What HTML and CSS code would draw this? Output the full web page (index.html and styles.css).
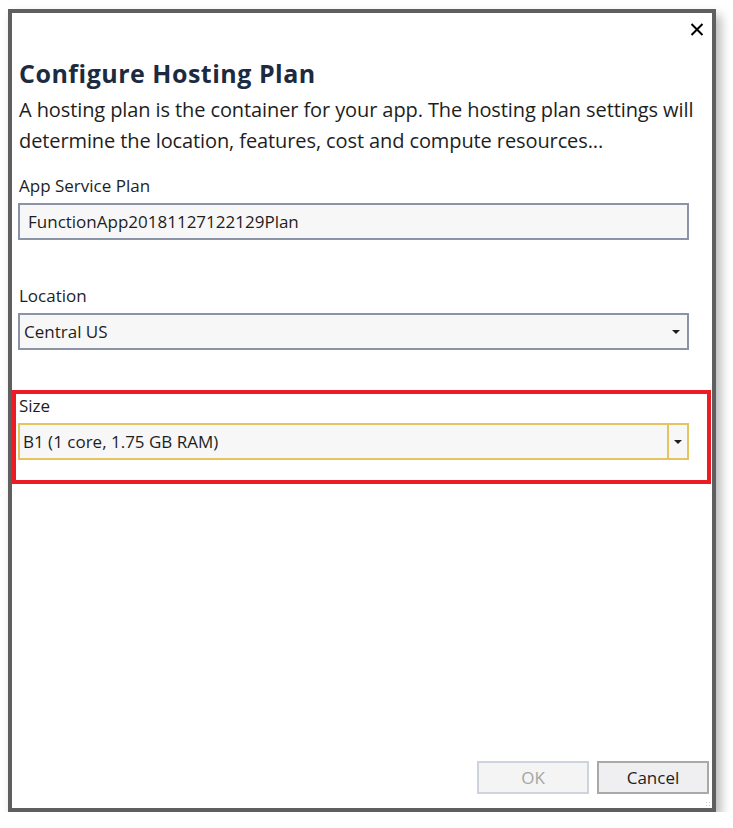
FILE: index.html
```html
<!DOCTYPE html>
<html lang="en">
<head>
<meta charset="utf-8">
<title>Configure Hosting Plan</title>
<link rel="stylesheet" href="styles.css">
</head>
<body>
<div class="window">
  <div class="titlebar">
    <button class="close" aria-label="Close">
      <svg width="14" height="13" viewBox="0 0 14 13"><path d="M1.5 1 L12.5 12 M12.5 1 L1.5 12" stroke="#000" stroke-width="2" fill="none"/></svg>
    </button>
  </div>
  <div class="content">
    <h1 class="title">Configure Hosting Plan</h1>
    <p class="desc">A hosting plan is the container for your app. The hosting plan settings will determine the location, features, cost and compute resources...</p>

    <div class="field first">
      <label class="label">App Service Plan</label>
      <div class="input">FunctionApp20181127122129Plan</div>
    </div>

    <div class="field loc">
      <label class="label">Location</label>
      <div class="select">
        <span class="value">Central US</span>
        <span class="arrow"></span>
      </div>
    </div>

    <div class="highlight">
      <label class="label">Size</label>
      <div class="select focused">
        <span class="value">B1 (1 core, 1.75 GB RAM)</span>
        <span class="arrow-btn"><span class="arrow"></span></span>
      </div>
    </div>
  </div>
  <div class="footer">
    <button class="btn disabled">OK</button>
    <button class="btn">Cancel</button>
  </div>
  <div class="grip"></div>
</div>
</body>
</html>
```
FILE: styles.css
```css
* { box-sizing: border-box; }
html, body { margin: 0; padding: 0; background: #fff; }
body {
  font-family: "Open Sans", "Noto Sans", sans-serif;
  color: #1e1e1e;
}
.window {
  position: relative;
  margin: 9px 0 0 8px;
  width: 708px;
  height: 803px;
  border: 4px solid #5f5f5f;
  background: #fff;
  box-shadow: 5px 6px 10px rgba(0,0,0,0.28);
  display: flex;
  flex-direction: column;
}
.titlebar {
  display: flex;
  justify-content: flex-end;
  height: 44px;
  padding: 10px 8px 0 0;
}
.close {
  border: 0;
  background: transparent;
  padding: 0;
  width: 14px;
  height: 13px;
  display: block;
}
.close svg { display: block; }
.content {
  padding: 0 23px 0 6px;
}
.title {
  margin: 0;
  padding-left: 1px;
  font-size: 25px;
  line-height: 32px;
  font-weight: 700;
  color: #1c2b3f;
  letter-spacing: 0.5px;
}
.desc {
  margin: 5px -21px 0 0;
  padding-left: 1px;
  font-size: 20px;
  line-height: 31px;
  letter-spacing: -0.1px;
  color: #1e1e1e;
}
.label {
  display: block;
  padding-left: 1px;
  font-size: 17px;
  line-height: 22px;
  margin-bottom: 6px;
}
.field.first { margin-top: 19px; }
.field.loc { margin-top: 45px; }
.input, .select {
  height: 37px;
  border: 2px solid #8a94a6;
  background: #f7f7f7;
  display: flex;
  align-items: center;
  font-size: 17px;
}
.input { padding-left: 8px; }
.select { padding-left: 4px; position: relative; }
.select .value { flex: 1; }
.arrow {
  width: 0;
  height: 0;
  border-left: 4px solid transparent;
  border-right: 4px solid transparent;
  border-top: 4px solid #1e1e1e;
  margin-right: 7px;
}
.highlight {
  margin: 40px -22px 0 -6px;
  border: 4px solid #ed1c24;
  padding: 1px 18px 20px 2px;
}
.select.focused { border-color: #e6c35f; padding-left: 3px; }
.arrow-btn {
  align-self: stretch;
  width: 20px;
  border-left: 2px solid #e6c35f;
  display: flex;
  align-items: center;
  justify-content: center;
}
.arrow-btn .arrow { margin-right: 0; }
.footer {
  margin-top: auto;
  display: flex;
  justify-content: flex-end;
  gap: 8px;
  padding: 0 3px 14px 0;
}
.btn {
  width: 112px;
  height: 33px;
  font-family: "Open Sans", sans-serif;
  font-size: 17px;
  border: 2px solid #a9a9a9;
  background: #efeff1;
  color: #1e1e1e;
  padding: 0;
}
.btn.disabled {
  border-color: #cfd3dd;
  background: #f4f4f4;
  color: #a5a5a5;
}
.grip {
  position: absolute;
  right: 1px;
  bottom: 1px;
  width: 6px;
  height: 6px;
  background-image: radial-gradient(circle, #c8c8d4 0.8px, transparent 1px);
  background-size: 3px 3px;
}
```
